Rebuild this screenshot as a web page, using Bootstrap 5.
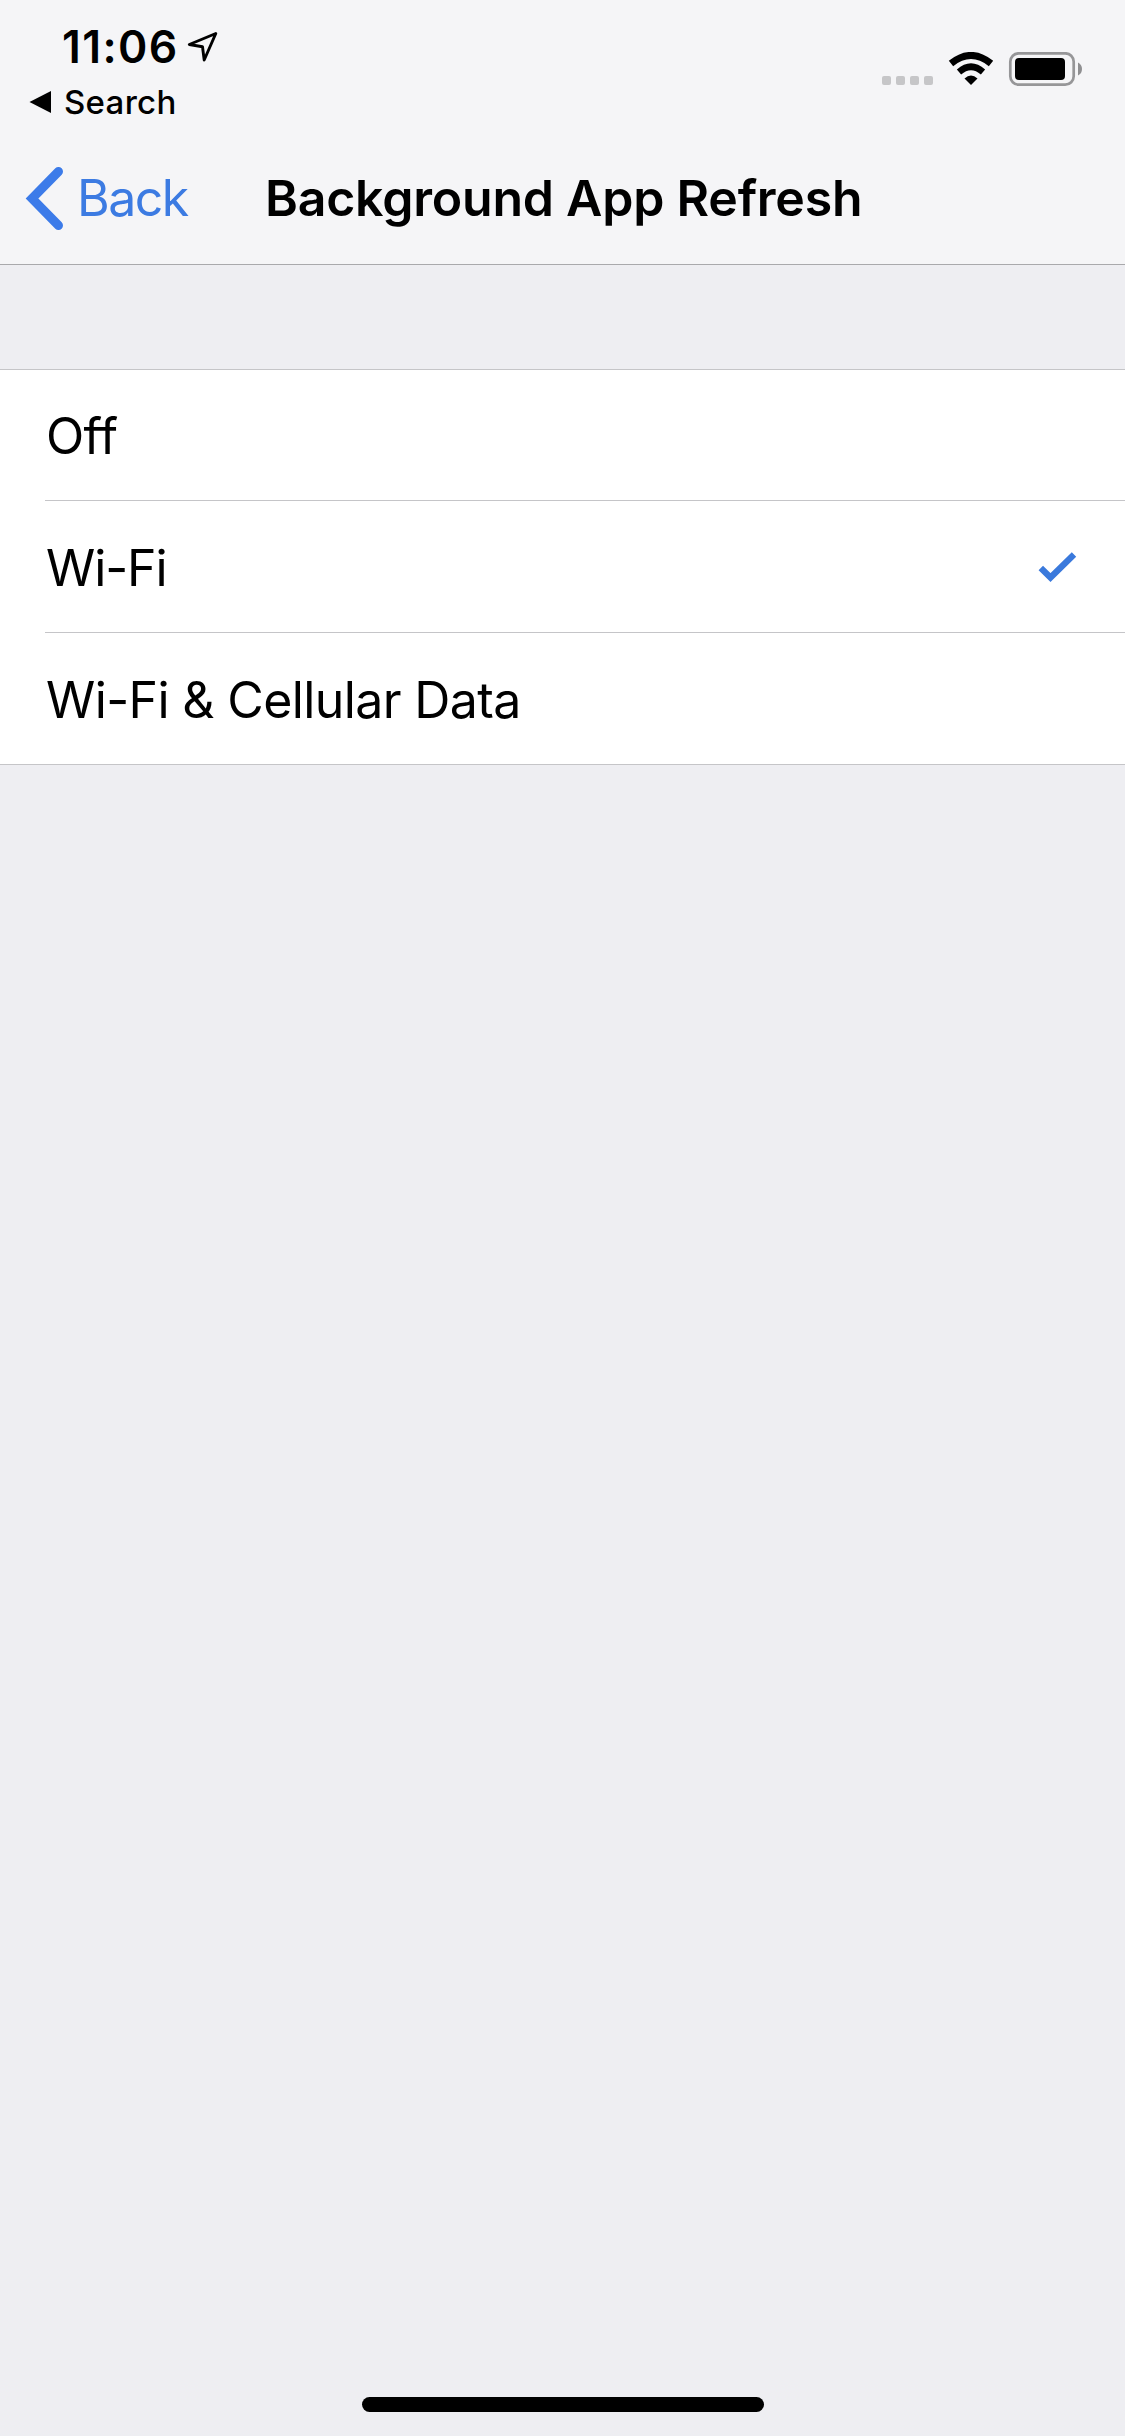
<!DOCTYPE html>
<html lang="en">
<head>
<meta charset="utf-8">
<meta name="viewport" content="width=device-width, initial-scale=1">
<title>Background App Refresh</title>
<link href="https://cdn.jsdelivr.net/npm/bootstrap@5.3.0/dist/css/bootstrap.min.css" rel="stylesheet">
<style>
  body { font-family: Inter, "Liberation Sans", sans-serif; background: #eeeef2; color: #000; }
  .screen { height: 2436px; }
  .top-area { background: #f5f5f7; border-bottom: 1px solid #a9a9ac; height: 265px; }
  .status-bar { height: 132px; }
  .clock { font-size: 44.5px; font-weight: 600; line-height: 54px; letter-spacing: 1.4px; width: 125px; }
  .clock-line { padding: 20px 0 0 62px; }
  .clock-line svg { margin-top: 11px; }
  .crumb { font-size: 33px; font-weight: 500; line-height: 40px; padding: 8px 0 0 29px; gap: 13px; letter-spacing: .3px; }
  .indicators { padding: 52px 42px 0 0; }
  .title-bar { height: 132px; }
  .back-link { color: #3c7be2; font-size: 50px; line-height: 60px; padding-left: 25px; gap: 13px; flex: 0 0 265px; letter-spacing: -1.5px; }
  .page-title { font-size: 50px; font-weight: 600; line-height: 60px; letter-spacing: -.23px; }
  .options { margin-top: 104px; border-top: 1px solid #c5c5c8; border-bottom: 1px solid #c5c5c8; }
  .options .list-group-item { height: 132px; padding: 2px 47px 0 1px; margin-left: 45px; border: 0; border-bottom: 1px solid #c5c5c8; font-size: 50px; line-height: 60px; letter-spacing: -.62px; color: #000; }
  .options .list-group-item:first-child { height: 131px; }
  .options .list-group-item:last-child { border-bottom: 0; height: 131px; }
  .options .chosen { letter-spacing: -1.1px; }
  .options .chosen svg { margin-bottom: 3px; }
  .home-bar { width: 402px; height: 15px; border-radius: 8px; background: #000; margin-bottom: 24px; }
</style>
<script src="https://cdn.jsdelivr.net/npm/bootstrap@5.3.0/dist/js/bootstrap.bundle.min.js"></script>
</head>
<body>
<div class="screen d-flex flex-column">
  <header class="top-area">
    <div class="status-bar d-flex justify-content-between">
      <div>
        <div class="clock-line d-flex align-items-start">
          <span class="clock">11:06</span>
          <svg width="31" height="31" viewBox="187 31 31 31"><path d="M215.800 33.500 189.300 44.500 202.500 46.800 204.200 60Z" fill="none" stroke="#000" stroke-width="2.900" stroke-linejoin="round"/></svg>
        </div>
        <div class="crumb d-flex align-items-center">
          <svg width="22" height="24" viewBox="0 0 22 24"><path d="M0.500 12 22 1V23Z"/></svg>
          <span>Search</span>
        </div>
      </div>
      <div class="indicators">
        <svg class="d-block" width="202" height="35" viewBox="881 52 202 35">
          <g fill="#c6c6c8"><rect x="882" y="76" width="9" height="9" rx="2"/><rect x="896" y="76" width="9" height="9" rx="2"/><rect x="910" y="76" width="9" height="9" rx="2"/><rect x="924" y="76" width="9" height="9" rx="2"/></g>
          <path d="M951 63.500Q971 47.500 991 63.500" fill="none" stroke="#000" stroke-width="7"/>
          <path d="M959 72Q971 61.500 983 72" fill="none" stroke="#000" stroke-width="6.500"/>
          <path d="M964.500 78.500Q971 72.500 977.500 78.500L971 85Z"/>
          <rect x="1010.300" y="53.300" width="63.400" height="31.400" rx="8.500" fill="none" stroke="#969698" stroke-width="2.700"/>
          <rect x="1015" y="58" width="50" height="22" rx="4"/>
          <path d="M1078 62.500Q1082 64.500 1082 69T1078 75.500Z" fill="#8f8f91"/>
        </svg>
      </div>
    </div>
    <nav class="title-bar d-flex align-items-center">
      <a class="back-link d-flex align-items-center text-decoration-none" href="#">
        <svg width="39" height="64" viewBox="25 166 39 64"><path d="M58.500 171.500 32 198.500 58.500 225.500" fill="none" stroke="#3c7be9" stroke-width="9" stroke-linecap="round"/></svg>
        <span>Back</span>
      </a>
      <h1 class="page-title m-0 text-nowrap">Background App Refresh</h1>
    </nav>
  </header>
  <main class="flex-grow-1">
    <ul class="options list-group list-group-flush rounded-0 bg-white">
      <li class="list-group-item d-flex align-items-center">Off</li>
      <li class="list-group-item chosen d-flex align-items-center justify-content-between">Wi-Fi
        <svg width="40" height="34" viewBox="1038 549 40 34"><path d="M1040.800 568 1050.500 577.500 1074 554.500" fill="none" stroke="#3a79dc" stroke-width="6.300"/></svg>
      </li>
      <li class="list-group-item d-flex align-items-center">Wi-Fi &amp; Cellular Data</li>
    </ul>
  </main>
  <div class="home-bar align-self-center"></div>
</div>
</body>
</html>
